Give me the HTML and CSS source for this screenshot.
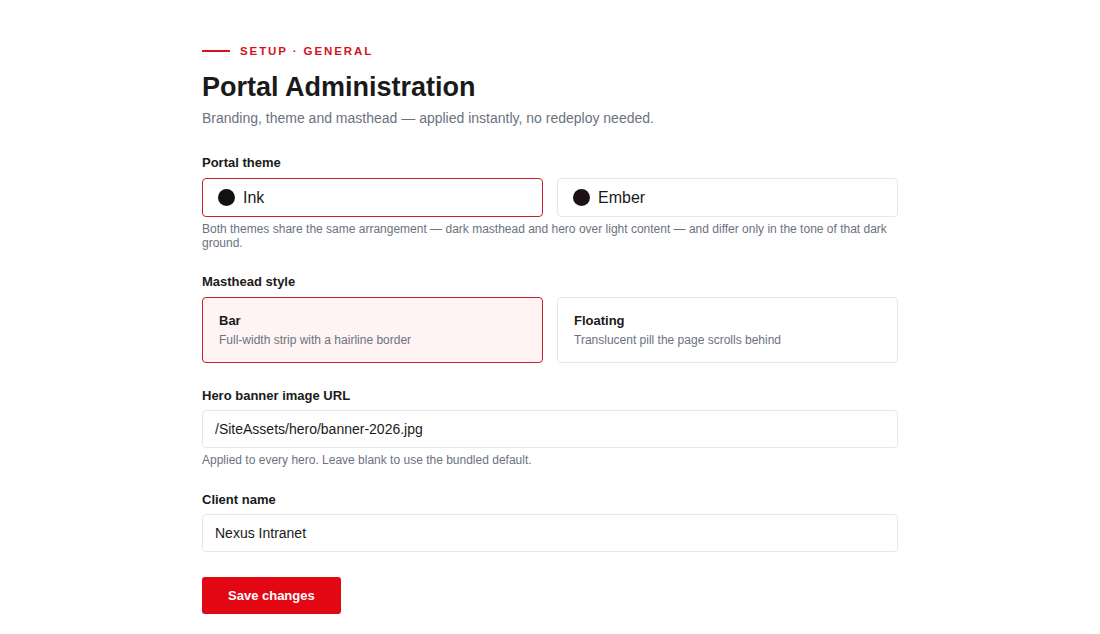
FILE: index.html
```html
<!DOCTYPE html>
<html lang="en">
<head>
  <meta charset="UTF-8" />
  <meta name="viewport" content="width=device-width, initial-scale=1.0" />
  <title>Portal Administration</title>
  <link rel="stylesheet" href="styles.css">
</head>
<body>
  <main class="page">
    <div class="eyebrow"><span class="eyebrow-line"></span>SETUP · GENERAL</div>
    <h1>Portal Administration</h1>
    <p class="lead">Branding, theme and masthead — applied instantly, no redeploy needed.</p>

    <section class="field">
      <div class="label">Portal theme</div>
      <div class="choices">
        <button class="theme selected"><span class="dot ink"></span>Ink</button>
        <button class="theme"><span class="dot ember"></span>Ember</button>
      </div>
      <p class="help">Both themes share the same arrangement — dark masthead and hero over light content — and differ only in the tone of that dark ground.</p>
    </section>

    <section class="field masthead">
      <div class="label">Masthead style</div>
      <div class="choices">
        <button class="style selected">
          <span class="style-title">Bar</span>
          <span class="style-desc">Full-width strip with a hairline border</span>
        </button>
        <button class="style">
          <span class="style-title">Floating</span>
          <span class="style-desc">Translucent pill the page scrolls behind</span>
        </button>
      </div>
    </section>

    <section class="field">
      <label class="label input-label" for="hero">Hero banner image URL</label>
      <input type="text" id="hero" value="/SiteAssets/hero/banner-2026.jpg" />
      <p class="help">Applied to every hero. Leave blank to use the bundled default.</p>
    </section>

    <section class="field">
      <label class="label input-label" for="client">Client name</label>
      <input type="text" id="client" value="Nexus Intranet" />
    </section>

    <button class="save">Save changes</button>
  </main>
</body>
</html>
```

FILE: styles.css
```css
body {
  margin: 0;
  font-family: "Liberation Sans", Arial, sans-serif;
  background: #ffffff;
  color: #1a1a1a;
}
.page {
  width: 696px;
  margin: 0 auto;
  padding-top: 45px;
}
.eyebrow {
  display: flex;
  align-items: center;
  gap: 10px;
  font-size: 11.5px;
  font-weight: 700;
  letter-spacing: 1.9px;
  color: #d2141e;
}
.eyebrow-line {
  display: inline-block;
  width: 28px;
  height: 2px;
  background: #d2141e;
}
h1 {
  margin: 13px 0 0;
  font-size: 27px;
  line-height: 34px;
  font-weight: 700;
  color: #1a1a1a;
}
.lead {
  margin: 6px 0 0;
  font-size: 14px;
  color: #6b7280;
}
.field {
  margin-top: 29px;
}
.field + .field {
  margin-top: 25px;
}
.field.masthead {
  margin-top: 24px;
}
.label {
  display: block;
  font-size: 13px;
  font-weight: 700;
  color: #1a1a1a;
  margin-bottom: 8px;
}
.input-label {
  margin-bottom: 7px;
}
.choices {
  display: grid;
  grid-template-columns: 1fr 1fr;
  gap: 14px;
}
button {
  font-family: inherit;
  cursor: pointer;
}
.theme {
  display: flex;
  align-items: center;
  gap: 8px;
  height: 39px;
  padding: 0 15px;
  background: #ffffff;
  border: 1px solid #e5e7eb;
  border-radius: 4px;
  font-size: 16px;
  color: #1a1a1a;
  text-align: left;
}
.theme.selected,
.style.selected {
  border-color: #c8202a;
}
.dot {
  width: 17px;
  height: 17px;
  border-radius: 50%;
}
.dot.ink {
  background: #111111;
}
.dot.ember {
  background: #1e1113;
}
.help {
  margin: 5px 0 0;
  font-size: 12px;
  line-height: 14px;
  color: #6b7280;
}
.style {
  display: flex;
  flex-direction: column;
  gap: 5px;
  height: 66px;
  padding: 15px 16px 0;
  background: #ffffff;
  border: 1px solid #e5e7eb;
  border-radius: 4px;
  text-align: left;
}
.style.selected {
  background: #fff4f3;
}
.style-title {
  font-size: 13px;
  font-weight: 700;
  color: #1a1a1a;
}
.style-desc {
  font-size: 12px;
  color: #6b7280;
}
input[type="text"] {
  display: block;
  box-sizing: border-box;
  width: 100%;
  height: 38px;
  padding: 0 12px;
  border: 1px solid #e5e7eb;
  border-radius: 4px;
  font-family: inherit;
  font-size: 14px;
  color: #1a1a1a;
}
.save {
  margin-top: 25px;
  height: 37px;
  padding: 0 26px;
  background: #e30613;
  color: #ffffff;
  border: none;
  border-radius: 3px;
  font-size: 13px;
  font-weight: 700;
}
```
